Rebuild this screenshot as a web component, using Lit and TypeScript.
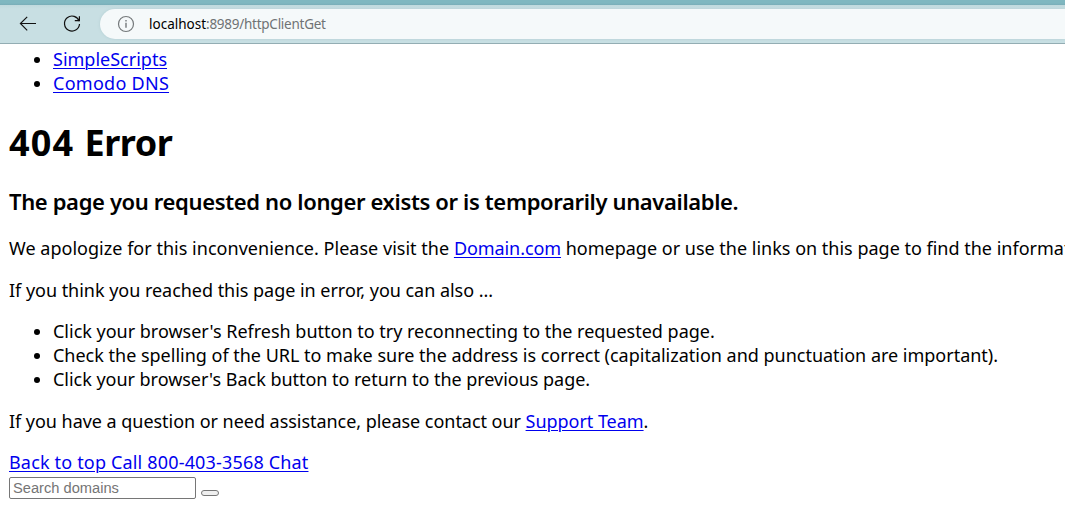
import { LitElement, html, css } from "lit";

class BrowserBar extends LitElement {
  static styles = css`
    :host { display: block; }
    .strip { height: 5px; background: linear-gradient(#7fb7c0 0 3px, #79adb7 5px); }
    .bar {
      display: flex; align-items: center; height: 38px; padding-left: 18px;
      background: linear-gradient(#c0d9dd, #c8dfe3 4px, #c8dfe3); border-bottom: 1px solid #93adb3;
    }
    svg { display: block; fill: none; flex: none; }
    .back { margin-right: 24px; }
    .reload { margin-right: 18px; }
    .address {
      flex: 1; height: 30px; display: flex; align-items: center; padding-left: 16px;
      border-radius: 15px 0 0 15px; background: #f5f9fa; box-shadow: 0 0 3px #b2cdd2;
    }
    .url { margin-left: 13px; font-size: 13.5px; line-height: 30px; color: #6f7375; letter-spacing: -0.26px; white-space: nowrap; }
    .host { color: #000; letter-spacing: 0; }
  `;
  render() {
    return html`
      <div class="strip"></div>
      <div class="bar">
        <svg class="back" width="20" height="20" viewBox="0 0 20 20" stroke="#111" stroke-width="1.15">
          <path d="M18 9.5H2.6M9.2 2.8L2.4 9.5L9.2 16.3" />
        </svg>
        <svg class="reload" width="20" height="20" viewBox="0 0 20 20" stroke="#111" stroke-width="1.2">
          <path d="M17.2 7.4A7.5 7.5 0 1 0 17.5 10M17.4 2.2V6.6H12.8" />
        </svg>
        <div class="address">
          <svg width="20" height="20" viewBox="0 0 20 20" stroke="#74797b" stroke-width="1.2">
            <circle cx="10" cy="10" r="7.5" />
            <path d="M10 8.8V13.8M10 6.1V7.5" stroke-width="1.4" />
          </svg>
          <span class="url"><span class="host">localhost</span>:8989/httpClientGet</span>
        </div>
      </div>
    `;
  }
}
customElements.define("browser-bar", BrowserBar);

class AppRoot extends LitElement {
  static styles = css`
    :host {
      display: block; height: 512px; overflow: hidden; background: #fff; color: #000;
      font: 18px/24px "Noto Sans", "Open Sans", sans-serif;
    }
    main { padding: 3px 0 0 9px; white-space: nowrap; }
    ul { margin: 0; padding-left: 44px; }
    p { margin: 0; }
    a { color: #0000ee; text-decoration: underline 1px; text-underline-offset: 2px; }
    h1 { margin: 24px 0 0; font-size: 36px; line-height: 48px; font-weight: 700; letter-spacing: -0.5px; }
    .code { letter-spacing: 1.1px; }
    h3 { margin: 19px 0 0; font-size: 22px; line-height: 30px; font-weight: 600; letter-spacing: -0.36px; }
    .intro { margin-top: 20px; }
    .next { margin-top: 18px; }
    .tips { margin-top: 17px; }
    .wide { letter-spacing: 0.27px; }
    .apology { letter-spacing: 0.025px; }
    .domain { letter-spacing: -0.08px; }
    .tight { letter-spacing: -0.01px; }
    .snug { letter-spacing: -0.03px; }
    .closer { letter-spacing: -0.04px; }
    .foot { margin-top: 17px; letter-spacing: 0.17px; }
    form { display: flex; align-items: flex-end; gap: 5px; margin-top: 3px; height: 22px; }
    input {
      box-sizing: border-box; width: 187px; height: 22px; padding: 0 3px; margin: 0;
      border: 1px solid #767676; border-radius: 2px; background: #fff;
      font: 14.67px "Liberation Sans", Arial, sans-serif;
    }
    input::placeholder { color: #757575; }
    button {
      box-sizing: border-box; width: 18px; height: 6px; margin: 0 0 3px; padding: 0;
      border: 1px solid #767676; border-radius: 3px; background: #efefef;
    }
  `;
  render() {
    return html`
      <browser-bar></browser-bar>
      <main>
        <ul>
          <li><a href="#">SimpleScripts</a></li>
          <li><a class="wide" href="#">Comodo DNS</a></li>
        </ul>
        <h1><span class="code">404 </span>Error</h1>
        <h3>The page you requested no longer exists or is temporarily unavailable.</h3>
        <p class="intro"><span class="apology">We apologize for this inconvenience. Please visit the </span><a class="domain" href="#">Domain.com</a> homepage or use the links on this page to find the information</p>
        <p class="next snug">If you think you reached this page in error, you can also ...</p>
        <ul class="tips">
          <li class="tight">Click your browser's Refresh button to try reconnecting to the requested page.</li>
          <li class="tight">Check the spelling of the URL to make sure the address is correct (capitalization and punctuation are important).</li>
          <li class="snug">Click your browser's Back button to return to the previous page.</li>
        </ul>
        <p class="next closer">If you have a question or need assistance, please contact our <a href="#">Support Team</a>.</p>
        <p class="foot"><a href="#">Back to top Call 800-403-3568 Chat</a></p>
        <form>
          <input type="text" placeholder="Search domains" />
          <button type="button" aria-label="Search"></button>
        </form>
      </main>
    `;
  }
}
customElements.define("app-root", AppRoot);
